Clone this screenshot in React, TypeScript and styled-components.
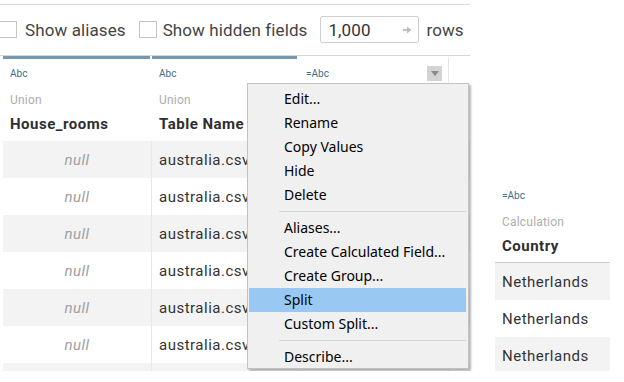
import { FC } from "react";
import styled, { createGlobalStyle } from "styled-components";

const GlobalStyle = createGlobalStyle`
  html, body {
    margin: 0;
    padding: 0;
    background: #fff;
    overflow: hidden;
  }
  * {
    box-sizing: border-box;
  }
`;

const Page = styled.div`
  position: relative;
  display: flex;
  align-items: flex-start;
  width: 624px;
  height: 371px;
  overflow: hidden;
  font-family: Roboto, "Liberation Sans", sans-serif;
  color: #333;
`;

const MainPane = styled.div`
  width: 470px;
  flex-shrink: 0;
  padding-top: 4px;
`;

const Toolbar = styled.div`
  display: flex;
  align-items: center;
  height: 52px;
  padding-bottom: 1px;
  border-top: 1px solid #dcdcdc;
  border-bottom: 1px solid #d6d6d6;
  font-size: 17px;
  letter-spacing: 0.1px;
  color: #444;
`;

const CheckBox = styled.span<{ $first?: boolean }>`
  display: inline-block;
  width: 18px;
  height: 17px;
  margin-left: ${(p) => (p.$first ? "-1px" : "13px")};
  margin-right: ${(p) => (p.$first ? "8px" : "6px")};
  border: 1px solid #c4c4c4;
  background: #fff;
`;

const RowsInput = styled.div`
  display: flex;
  align-items: center;
  justify-content: space-between;
  width: 99px;
  height: 27px;
  margin: 0 7px 0 13px;
  padding: 0 6px 0 7px;
  border: 1px solid #cfcfcf;
  border-radius: 2px;
  color: #333;
`;

const Table = styled.div`
  margin-left: 3px;
`;

const GridRow = styled.div<{ $shade?: boolean }>`
  display: grid;
  grid-template-columns: 149px 147px 150px;
  background: ${(p) => (p.$shade ? "#f3f3f3" : "#fff")};
`;

const HeaderCell = styled.div<{ $bar?: boolean; $divider?: boolean }>`
  display: flex;
  flex-direction: column;
  height: 85px;
  padding: 7px 6px 0 7px;
  border-top: 3px solid ${(p) => (p.$bar ? "#7299b0" : "#fff")};
  border-right: ${(p) => (p.$divider ? "1px solid #e6e6e6" : "none")};
  border-bottom: 1px solid #c8c8c8;
  ${(p) =>
    p.$bar && p.$divider
      ? "border-image: linear-gradient(to right, #7299b0 calc(100% - 1px), #fff calc(100% - 1px)) 1 0 0 0;"
      : ""}
`;

const TypeRow = styled.div`
  display: flex;
  align-items: center;
  justify-content: space-between;
  height: 15px;
`;

const TypeLabel = styled.span`
  font-size: 10px;
  color: #3d6f8a;
`;

const MenuButton = styled.span`
  display: flex;
  align-items: center;
  justify-content: center;
  width: 15px;
  height: 15px;
  background: #d3d3d3;
`;

const SourceLabel = styled.div`
  margin-top: 11px;
  font-size: 12px;
  line-height: 16px;
  letter-spacing: 0.2px;
  color: #adadad;
`;

const FieldName = styled.div`
  margin-top: 6px;
  font-size: 15px;
  line-height: 20px;
  font-weight: 700;
  letter-spacing: 0.5px;
  color: #2e2e2e;
  white-space: nowrap;
`;

const Cell = styled.div<{ $null?: boolean; $divider?: boolean; $height?: number }>`
  height: ${(p) => p.$height ?? 37}px;
  display: flex;
  align-items: center;
  justify-content: ${(p) => (p.$null ? "center" : "flex-start")};
  padding-left: ${(p) => (p.$null ? "0" : "7px")};
  border-right: ${(p) => (p.$divider ? "1px solid #e8e8e8" : "none")};
  font-size: 15px;
  letter-spacing: 0.5px;
  font-style: ${(p) => (p.$null ? "italic" : "normal")};
  color: ${(p) => (p.$null ? "#a0a0a0" : "#333")};
  white-space: nowrap;
  overflow: hidden;
`;

const SidePane = styled.div`
  width: 115px;
  margin: 178px 0 0 25px;
`;

const SideRow = styled.div<{ $shade?: boolean }>`
  background: ${(p) => (p.$shade ? "#f3f3f3" : "#fff")};
`;

const ContextMenu = styled.div`
  position: absolute;
  left: 247px;
  top: 83px;
  width: 222px;
  height: 286px;
  padding-top: 3px;
  background: #f0f0f0;
  border: 1px solid #c2c2c2;
  box-shadow: 2px 2px 2px rgba(0, 0, 0, 0.28);
  font-family: "Noto Sans", "Open Sans", sans-serif;
  font-size: 14px;
  color: #000;
`;

const MenuItem = styled.div<{ $active?: boolean }>`
  height: 24px;
  line-height: 24px;
  margin: 0 2px 0 1px;
  padding-left: 35px;
  background: ${(p) => (p.$active ? "#99c9f3" : "transparent")};
`;

const MenuSeparator = styled.div`
  height: 9px;
  margin: 0 2px 0 31px;
  padding-top: 4px;
  &::after {
    content: "";
    display: block;
    border-top: 1px solid #d5d5d5;
  }
`;

const ArrowIcon: FC = () => (
  <svg width="9" height="8" viewBox="0 0 9 8">
    <path d="M0 3h5v2H0z M4 0.5 8.5 4 4 7.5z" fill="#bdbdbd" />
  </svg>
);

const CaretIcon: FC = () => (
  <svg width="8" height="5" viewBox="0 0 8 5">
    <path d="M0 0h8L4 5z" fill="#8a8a8a" />
  </svg>
);

const columns = [
  { type: "Abc", source: "Union", name: "House_rooms", bar: true },
  { type: "Abc", source: "Union", name: "Table Name", bar: true },
  { type: "=Abc", source: "", name: "", bar: false, menu: true },
];

const menuItems = [
  "Edit...",
  "Rename",
  "Copy Values",
  "Hide",
  "Delete",
  "-",
  "Aliases...",
  "Create Calculated Field...",
  "Create Group...",
  "Split",
  "Custom Split...",
  "-",
  "Describe...",
];

const App: FC = () => {
  const rows = Array.from({ length: 6 }, (_, i) => i);

  return (
    <>
      <GlobalStyle />
      <Page>
        <MainPane>
          <Toolbar>
            <CheckBox $first />
            <span>Show aliases</span>
            <CheckBox />
            <span>Show hidden fields</span>
            <RowsInput>
              <span>1,000</span>
              <ArrowIcon />
            </RowsInput>
            <span>rows</span>
          </Toolbar>

          <Table>
            <GridRow>
              {columns.map((col, i) => (
                <HeaderCell key={i} $bar={col.bar} $divider>
                  <TypeRow>
                    <TypeLabel>{col.type}</TypeLabel>
                    {col.menu && (
                      <MenuButton>
                        <CaretIcon />
                      </MenuButton>
                    )}
                  </TypeRow>
                  <SourceLabel>{col.source || "\u00a0"}</SourceLabel>
                  <FieldName>{col.name || "\u00a0"}</FieldName>
                </HeaderCell>
              ))}
            </GridRow>
            {rows.map((r) => (
              <GridRow key={r} $shade={r % 2 === 0}>
                <Cell $null $divider>
                  null
                </Cell>
                <Cell $divider>australia.csv</Cell>
                <Cell $divider />
              </GridRow>
            ))}
            <GridRow $shade>
              <Cell $divider $height={8} />
              <Cell $divider $height={8} />
              <Cell $divider $height={8} />
            </GridRow>
          </Table>
        </MainPane>

        <SidePane>
          <HeaderCell>
            <TypeRow>
              <TypeLabel>=Abc</TypeLabel>
            </TypeRow>
            <SourceLabel>Calculation</SourceLabel>
            <FieldName>Country</FieldName>
          </HeaderCell>
          {[0, 1, 2].map((r) => (
            <SideRow key={r} $shade={r % 2 === 0}>
              <Cell>Netherlands</Cell>
            </SideRow>
          ))}
        </SidePane>

        <ContextMenu>
          {menuItems.map((item, i) =>
            item === "-" ? (
              <MenuSeparator key={i} />
            ) : (
              <MenuItem key={i} $active={item === "Split"}>
                {item}
              </MenuItem>
            )
          )}
        </ContextMenu>
      </Page>
    </>
  );
};

export default App;
